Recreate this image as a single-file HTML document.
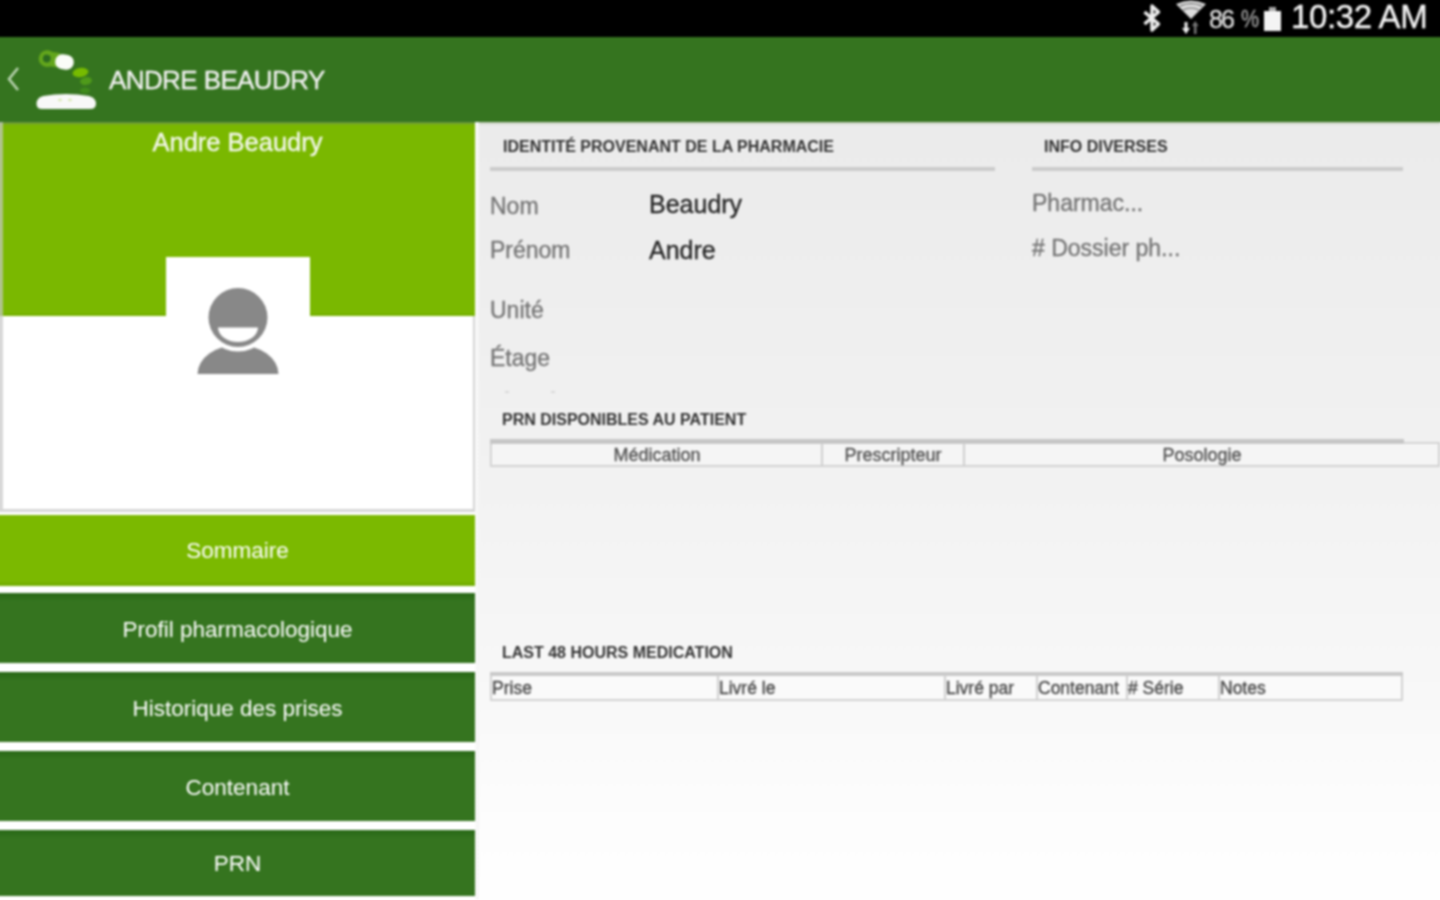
<!DOCTYPE html>
<html><head><meta charset="utf-8">
<style>
*{margin:0;padding:0;box-sizing:border-box}
html,body{width:1440px;height:900px;overflow:hidden;background:#fff;font-family:"Liberation Sans",sans-serif}
.abs{position:absolute}
.t{position:absolute;white-space:nowrap;line-height:1}
#status{left:-12px;top:-12px;width:1464px;height:49px;background:#000}
#bar{left:-12px;top:37px;width:1464px;height:85px;background:#35741f}
#right{left:475px;top:122px;width:977px;height:790px;background:linear-gradient(#ebebeb 0%,#efefef 25%,#f3f3f3 50%,#f8f8f8 72%,#fdfdfd 88%,#ffffff 100%)}
#left{left:-12px;top:122px;width:487px;height:790px;background:#fff}
.btn{position:absolute;left:-12px;width:487px;padding-left:12px;color:#fff;font-size:22.5px;text-align:center}
.dk{background:linear-gradient(#2a6a18 0px,#2c6c19 3px,#35741f 8px,#35741f 100%)}
.lt{background:linear-gradient(#7bb900 0,#7bb900 calc(100% - 5px),#73ae00 calc(100% - 2px),#73ae00 100%)}
.hdr{font-weight:bold;font-size:16px;color:#333}
.lbl{font-size:23px;color:#757575}
.val{font-size:25px;color:#272727}
.hl{position:absolute;height:4px;background:#cbcbcb}
.cell{font-size:18px;color:#555}
.cell2{font-size:17.5px;color:#484848}
#root{position:absolute;left:-12px;top:-12px;width:1464px;height:924px;overflow:hidden;filter:blur(0.8px)}
#inner{position:absolute;left:12px;top:12px;width:1440px;height:900px}
.t{-webkit-text-stroke:0.35px currentColor}
.t.hdr{-webkit-text-stroke:0}
</style></head><body>
<div id="root"><div id="inner">
<div id="status" class="abs"></div>
<div id="bar" class="abs"></div>
<div id="left" class="abs"></div>
<div id="right" class="abs"></div>

<!-- status bar content -->
<div class="t" style="left:1291px;top:0px;font-size:33px;color:#f4f4f4;letter-spacing:-0.4px">10:32 AM</div>
<div class="t" style="left:1209px;top:7px;font-size:25px;color:#ddd;letter-spacing:-2px">86</div>
<div class="t" style="left:1241px;top:7px;font-size:24px;color:#a0a0a0;letter-spacing:-1px;transform:scaleX(0.85);transform-origin:left">%</div>


<!-- bluetooth -->
<svg class="abs" style="left:1140px;top:2px" width="24" height="32" viewBox="0 0 24 32">
<path d="M4.5 10 L18.5 22 L12 28 L12 4 L18.5 10 L4.5 22" fill="none" stroke="#eee" stroke-width="3.4" stroke-linejoin="round"/>
</svg>
<!-- wifi -->
<svg class="abs" style="left:1174px;top:0px" width="34" height="36" viewBox="0 0 34 36">
<path d="M2 4 Q17 -3 32 4 L17 19 Z" fill="#ddd"/>
<path d="M6 6 Q17 1 28 6" fill="none" stroke="#555" stroke-width="1.2"/>
<path d="M9 10 Q17 6 25 10" fill="none" stroke="#666" stroke-width="1.2"/>
<rect x="10.5" y="22" width="3" height="8" fill="#eee"/>
<path d="M8 28 L16 28 L12 34 Z" fill="#eee"/>
<rect x="20" y="25" width="2.5" height="9" fill="#777"/>
<path d="M18 26 L24.5 26 L21.2 21 Z" fill="#777"/>
</svg>
<!-- battery -->
<div class="abs" style="left:1264px;top:11px;width:17px;height:20px;background:#f4f4f4"></div>
<div class="abs" style="left:1269px;top:7px;width:7px;height:4px;background:#aaa"></div>

<!-- action bar -->
<!-- back chevron -->
<svg class="abs" style="left:3px;top:64px" width="20" height="30" viewBox="0 0 20 30">
<path d="M15 4 L6 15 L15 26" fill="none" stroke="#b9d3b0" stroke-width="2.6"/>
</svg>
<!-- logo -->
<svg class="abs" style="left:30px;top:45px" width="70" height="70" viewBox="0 0 70 70">
<g transform="rotate(8 25 15.5)">
<circle cx="16.8" cy="14.7" r="8.3" fill="#63a61c"/><rect x="16.8" y="7.4" width="13" height="14.6" rx="3" fill="#63a61c"/>
<circle cx="16.6" cy="14.7" r="3.9" fill="#2c6b1f"/>
<rect x="25.3" y="8.2" width="18.6" height="14.9" rx="7" fill="#fafcf8"/>
</g>
<ellipse cx="50.5" cy="27.5" rx="8" ry="4.5" transform="rotate(-10 50.5 27.5)" fill="#77bb00"/>
<ellipse cx="56" cy="36" rx="6" ry="3.8" transform="rotate(-10 56 36)" fill="#4f9a1a"/>
<ellipse cx="55" cy="45.5" rx="5" ry="3" fill="#3f8a1c"/>
<path d="M13 51 Q36 47 59 51 Q66 53 66 58.5 Q66 64 60 64 L12 64 Q6.5 64 6.5 58.5 Q6.5 53 13 51 Z" fill="#f8f8f8"/>
<ellipse cx="30" cy="55" rx="2" ry="1.2" fill="#d8e8b0"/><ellipse cx="40" cy="55" rx="2" ry="1.2" fill="#d8e8b0"/>
</svg>

<div class="t" style="left:109px;top:67px;font-size:26px;color:#f2f2f2;letter-spacing:-0.6px">ANDRE BEAUDRY</div>

<!-- left panel -->
<div class="abs" style="left:-12px;top:122px;width:487px;height:194px;background:#7ab800"></div>
<div class="t" style="left:0;width:475px;text-align:center;top:130px;font-size:25.5px;color:#f4f8ec">Andre Beaudry</div>
<div class="abs" style="left:166px;top:257px;width:144px;height:60px;background:#fff"></div>
<div class="abs" style="left:-12px;top:313.5px;width:178px;height:1.5px;background:#70aa00"></div><div class="abs" style="left:310px;top:313.5px;width:164px;height:1.5px;background:#70aa00"></div>
<div class="abs" style="left:-12px;top:122px;width:487px;height:3px;background:linear-gradient(#5f8c48,#78a828 60%,#7ab800)"></div>
<div class="abs" style="left:475px;top:122px;width:965px;height:4px;background:linear-gradient(#b9c4b0,#e2e4e0 60%,#ebebeb)"></div>
<div class="abs" style="left:-12px;top:122px;width:14.5px;height:390px;background:rgba(200,200,200,0.7)"></div>
<div class="abs" style="left:472.5px;top:316px;width:3px;height:196px;background:#d4d4d4"></div>
<div class="abs" style="left:475px;top:122px;width:4px;height:778px;background:linear-gradient(90deg,#fbfbfb,#f4f4f4)"></div>
<div class="abs" style="left:-12px;top:509px;width:487px;height:3px;background:#d6d6d6"></div>

<div class="btn lt" style="top:515px;height:71px;line-height:72.5px">Sommaire</div>
<div class="btn dk" style="top:593px;height:70px;line-height:74px">Profil pharmacologique</div>
<div class="btn dk" style="top:672px;height:70px;line-height:74px">Historique des prises</div>
<div class="btn dk" style="top:751px;height:70px;line-height:74px">Contenant</div>
<div class="btn dk" style="top:830px;height:66px;line-height:67px">PRN</div>


<!-- avatar -->
<svg class="abs" style="left:166px;top:257px" width="144" height="130" viewBox="166 257 144 130">
<path d="M197.5 374 A40.5 29 0 0 1 278.5 374 Z" fill="#888"/>
<circle cx="238" cy="317.5" r="34" fill="#fff"/>
<circle cx="238" cy="317.5" r="29.5" fill="#888"/>
<path d="M218 327.5 L258 327.5 A20 14.5 0 0 1 218 327.5 Z" fill="#fff"/>
</svg>

<!-- right content -->
<!-- tiny marks -->
<div class="abs" style="left:505px;top:391px;width:4px;height:2px;background:#d8d8d8"></div>
<div class="abs" style="left:551px;top:391px;width:4px;height:2px;background:#d8d8d8"></div>

<!-- table 1 -->
<div class="abs" style="left:490px;top:442px;width:950px;height:25px;border:2px solid #d2d2d2;background:#f5f5f5;box-shadow:inset 1px 1px 0 #fbfbfb"></div>
<div class="hl" style="left:490px;top:439px;width:914px;height:5px;background:#c6c6c6"></div>
<div class="abs" style="left:821px;top:443px;width:2px;height:23px;background:#cfcfcf"></div>
<div class="abs" style="left:963px;top:443px;width:2px;height:23px;background:#cfcfcf"></div>
<div class="t cell" style="left:492px;width:330px;text-align:center;top:446px">Médication</div>
<div class="t cell" style="left:823px;width:140px;text-align:center;top:446px">Prescripteur</div>
<div class="t cell" style="left:965px;width:474px;text-align:center;top:446px">Posologie</div>

<!-- table 2 -->
<div class="abs" style="left:490px;top:673px;width:913px;height:28px;border:2px solid #d2d2d2;border-top:0;border-bottom-width:2.5px;background:#fafafa"></div>
<div class="hl" style="left:490px;top:672px;width:913px;height:4px;background:#c9c9c9"></div>
<div class="abs" style="left:717px;top:675px;width:2px;height:24px;background:#cfcfcf"></div>
<div class="abs" style="left:944px;top:675px;width:2px;height:24px;background:#cfcfcf"></div>
<div class="abs" style="left:1036px;top:675px;width:2px;height:24px;background:#cfcfcf"></div>
<div class="abs" style="left:1126px;top:675px;width:2px;height:24px;background:#cfcfcf"></div>
<div class="abs" style="left:1218px;top:675px;width:2px;height:24px;background:#cfcfcf"></div>
<div class="t cell2" style="left:492px;top:680px">Prise</div>
<div class="t cell2" style="left:719px;top:680px">Livré le</div>
<div class="t cell2" style="left:946px;top:680px">Livré par</div>
<div class="t cell2" style="left:1038px;top:680px">Contenant</div>
<div class="t cell2" style="left:1128px;top:680px"># Série</div>
<div class="t cell2" style="left:1220px;top:680px">Notes</div>

<div class="t hdr" style="left:503px;top:139px">IDENTITÉ PROVENANT DE LA PHARMACIE</div>
<div class="hl" style="left:490px;top:166.5px;width:505px"></div>
<div class="t hdr" style="left:1044px;top:139px">INFO DIVERSES</div>
<div class="hl" style="left:1032px;top:166.5px;width:371px"></div>

<div class="t lbl" style="left:490px;top:194.5px">Nom</div>
<div class="t val" style="left:649px;top:192px">Beaudry</div>
<div class="t lbl" style="left:490px;top:238.5px">Prénom</div>
<div class="t val" style="left:649px;top:237.5px">Andre</div>
<div class="t lbl" style="left:490px;top:298.5px">Unité</div>
<div class="t lbl" style="left:490px;top:347px">Étage</div>

<div class="t lbl" style="left:1032px;top:191.5px">Pharmac...</div>
<div class="t lbl" style="left:1032px;top:236.5px"># Dossier ph...</div>

<div class="t hdr" style="left:502px;top:411.5px">PRN DISPONIBLES AU PATIENT</div>
<div class="t hdr" style="left:502px;top:644.5px">LAST 48 HOURS MEDICATION</div>
</div></div>
</body></html>
